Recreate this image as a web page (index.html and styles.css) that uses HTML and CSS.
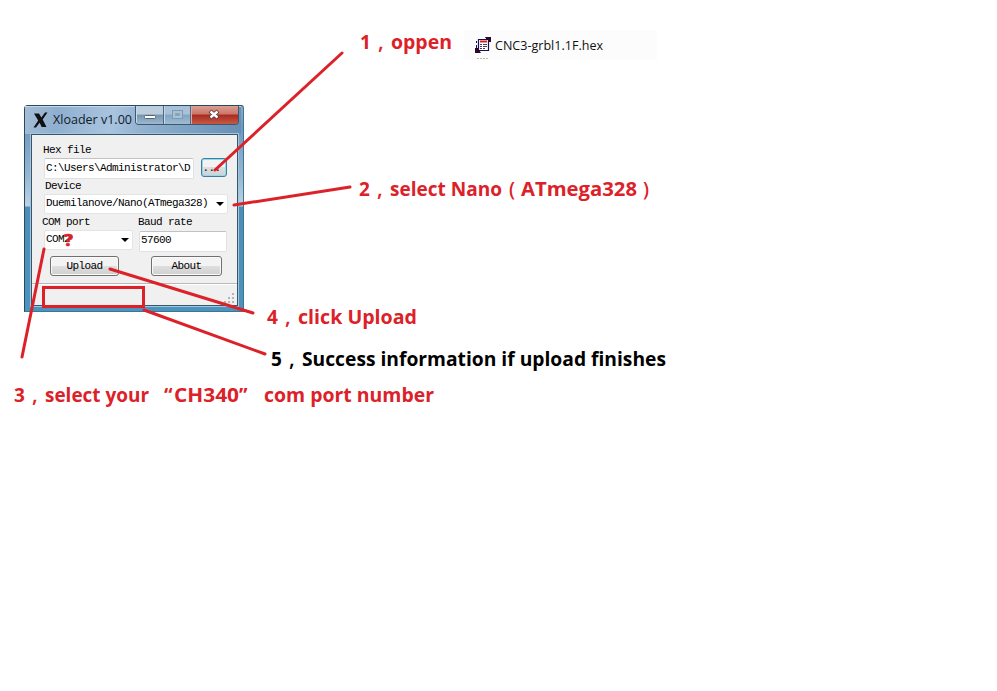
FILE: index.html
```html
<!DOCTYPE html>
<html lang="en">
<head>
<meta charset="utf-8">
<title>Xloader guide</title>
<link rel="stylesheet" href="styles.css">
</head>
<body>
<main class="canvas">
  <section class="window">
    <header class="titlebar">
      <svg class="logo" width="15" height="16" viewBox="0 0 15 16"><path d="M1 1.500h5l2.400 4L12 .5h2.500L9.700 7.600 13.500 15H8.700L6.600 10.800 3 15.500H.5L5.200 8.600Z" fill="#111"/></svg>
      <h1 class="title"><svg width="82" height="22"><text x="0" y="15" textLength="79" lengthAdjust="spacingAndGlyphs">Xloader v1.00</text></svg></h1>
      <div class="controls">
        <span class="control"><svg width="27" height="19"><rect x="8.500" y="9.500" width="11" height="3" rx="1" fill="#fff" stroke="#53657a"/></svg></span>
        <span class="control max"><svg width="26" height="19"><rect x="8.500" y="4.500" width="10" height="8" fill="#a9c1d3" stroke="#7f99b0"/><rect x="11.500" y="7.500" width="4" height="2" fill="#7ba0c0" stroke="#8ba6bc"/></svg></span>
        <span class="control close"><svg width="46" height="19"><path d="M19 5l8 7m0-7l-8 7" stroke="#5e3439" stroke-width="4"/><path d="M19.500 5.500l7 6m0-6l-7 6" stroke="#fff" stroke-width="2.400"/></svg></span>
      </div>
    </header>
    <div class="client">
      <div class="form">
        <label class="caption">Hex file</label>
        <div class="row file-row"><div class="field path">C:\Users\Administrator\D</div><button class="button browse">...</button></div>
        <label class="caption device-label">Device</label>
        <div class="field combo device">Duemilanove/Nano(ATmega328)<i class="arrow"></i></div>
        <div class="row captions"><label class="caption com-label">COM port</label><label class="caption">Baud rate</label></div>
        <div class="row ports"><div class="field combo com">COM2<i class="arrow"></i></div><div class="field baud">57600</div></div>
        <div class="row actions"><button class="button upload">Upload</button><button class="button about">About</button></div>
      </div>
      <footer class="status"><svg width="10" height="12" fill="#b3b3b3"><path d="M8 1h2v2h-2zM4 5h2v2h-2zM8 5h2v2h-2zM0 9h2v2h-2zM4 9h2v2h-2zM8 9h2v2h-2z"/></svg></footer>
    </div>
  </section>

  <div class="file-item">
    <svg class="file-icon" width="18" height="24" viewBox="0 0 18 24">
      <path d="M10 0h6v5h-3zM0 11h3l3 5H0z" fill="#35051a"/>
      <path d="M3.500 2.500h10v11h-10z" fill="#fff" stroke="#15104f" stroke-width="1.200"/>
      <path d="M1.500 4v2m0 2v4" fill="none" stroke="#15104f"/>
      <path d="M5 4.500h7" stroke="#d31e2c" stroke-width="2"/>
      <path d="M5 7.500h2m1 0h4M5 9.500h2m1 0h4M5 11.500h2m1 0h2" stroke="#483a60"/>
      <path d="M2 21.500h11" stroke="#bbb" stroke-dasharray="2 1"/>
    </svg>
    <svg width="120" height="22"><text x="2" y="13" textLength="108" lengthAdjust="spacingAndGlyphs">CNC3-grbl1.1F.hex</text></svg>
  </div>

  <svg class="notes" width="997" height="691" viewBox="0 0 997 691">
    <g class="lines">
      <path d="M342 53L215 170M350 187L234 205M44 249L22 357M110 269L253 313M144 310L265 354"/>
      <rect x="43.500" y="287.500" width="100" height="19"/>
    </g>
    <text class="question" x="64" y="246" textLength="9" lengthAdjust="spacingAndGlyphs">?</text>
    <text y="49"><tspan x="360">1</tspan><tspan class="comma" x="378">,</tspan><tspan x="391" textLength="61" lengthAdjust="spacingAndGlyphs">oppen</tspan></text>
    <text y="196"><tspan x="359">2</tspan><tspan class="comma" x="377">,</tspan><tspan x="390" textLength="112" lengthAdjust="spacingAndGlyphs">select Nano</tspan><tspan class="paren" x="509">(</tspan><tspan x="521" textLength="116" lengthAdjust="spacingAndGlyphs">ATmega328</tspan><tspan class="paren" x="643">)</tspan></text>
    <text y="402"><tspan x="14">3</tspan><tspan class="comma" x="32">,</tspan><tspan x="45" textLength="104" lengthAdjust="spacingAndGlyphs">select your</tspan><tspan x="164">“</tspan><tspan x="174" textLength="65" lengthAdjust="spacingAndGlyphs">CH340</tspan><tspan x="239">”</tspan><tspan x="264" textLength="170" lengthAdjust="spacingAndGlyphs">com port number</tspan></text>
    <text y="324"><tspan x="267">4</tspan><tspan class="comma" x="285">,</tspan><tspan x="298" textLength="119" lengthAdjust="spacingAndGlyphs">click Upload</tspan></text>
    <text class="result" y="366"><tspan x="271">5</tspan><tspan class="comma" x="289">,</tspan><tspan x="302" textLength="364" lengthAdjust="spacingAndGlyphs">Success information if upload finishes</tspan></text>
  </svg>
</main>
</body>
</html>
```
FILE: styles.css
```css
* { box-sizing: border-box; }
body { margin: 0; background: #fff; }
.canvas { position: relative; width: 997px; height: 691px; overflow: hidden; }
.window {
  position: absolute; left: 24px; top: 105px; width: 220px; height: 207px;
  padding: 0 5px 5px 7px; border: 1px solid #274b65; border-right-color: #3c7595; border-bottom-color: #3c7595;
  border-radius: 4px 3px 0 0;
  background: linear-gradient(180deg, #91a9c4 0, #7198bf 22px, #96b7d2 70px, #bdd3e5 100px, #4b8eb7 101px, #4b94bd 100%);
}
.titlebar { display: flex; height: 28px; margin: 0 -3px 0 -7px; padding-left: 8px; background: linear-gradient(100deg, #a6bdd5 0, #8fafd0 15%, #a9c4df 40%, #91b1d0 55%, #668fb5 100%); border-top: 1px solid #c8d8e7; }
.logo { margin-top: 5px; }
.title { margin: 2px 0 0 5px; width: 82px; font: 13px "Open Sans", "Noto Sans", sans-serif; }
.title svg { display: block; }
.title text { fill: #111a28; }
.controls { display: flex; flex: none; width: 104px; height: 19px; margin-top: -1px; border: 1px solid #3f566e; border-top: 0; border-radius: 0 0 4px 4px; overflow: hidden; }
.control { width: 28px; border-right: 1px solid #4f6880; background: linear-gradient(#bccddd 0 45%, #7794af 50%, #9db9d0); box-shadow: inset 1px 0 #c8d8e5; }
.control svg { display: block; }
.max { width: 27px; background: linear-gradient(#a9c1d8 0 45%, #83a5c2 50%, #9ebbd3); }
.close { width: 47px; border-right: 0; background: linear-gradient(#dc9e94 0, #ca7569 45%, #a92a20 50%, #c65a43); box-shadow: inset 1px 0 #e0a79e; }
.client { height: 172px; margin: 0 0 0 -1px; border: 1px solid #37556d; background: #f0f0f0; box-shadow: 0 0 0 1px #a5c5da; color: #000; font: 11px/12px "Liberation Mono", monospace; letter-spacing: -.6px; }
.form { height: 148px; padding: 9px 0 0 10px; }
.row { display: flex; }
.caption { display: block; height: 14px; padding-left: 1px; }
.field { background: #fff; border: 1px solid #dfe1e4; border-top-color: #bfc2c7; border-radius: 2px; padding: 2px 1px; white-space: pre; overflow: hidden; }
.file-row { height: 22px; }
.path { width: 150px; height: 21px; margin-left: 2px; padding-top: 3px; }
.button { height: 20px; padding: 0; border: 1px solid #707070; border-radius: 3px; background: linear-gradient(#f3f3f3 0 48%, #dedede 50%, #d0d0d0); box-shadow: inset 0 0 0 1px #fafafa; color: #000; font: inherit; letter-spacing: -.6px; }
.browse { width: 26px; height: 19px; margin: 0 0 0 7px; padding-right: 5px; border-color: #3f7f9c; box-shadow: inset 0 0 0 1px #8edaf0; }
.device-label { padding-left: 3px; }
.combo { display: flex; justify-content: space-between; border-color: #e4e4e4; }
.arrow { width: 0; height: 0; margin: 5px 2px 0 0; border: 4px solid transparent; border-top-color: #000; border-bottom: 0; }
.device { width: 184px; height: 20px; margin-left: 2px; }
.captions { height: 16px; padding-top: 2px; }
.com-label { width: 95px; padding-left: 0; }
.ports { height: 23px; padding-left: 2px; }
.com { width: 89px; height: 20px; }
.baud { width: 88px; height: 21px; margin: 1px 0 0 6px; }
.actions { margin-top: 3px; padding-left: 8px; }
.upload { width: 69px; }
.about { width: 71px; margin-left: 32px; }
.status { display: flex; justify-content: flex-end; align-items: flex-end; height: 22px; padding: 0 3px 1px; border-top: 1px solid #b9b9b9; box-shadow: inset 0 1px #fff; }
.file-item { position: absolute; left: 464px; top: 30px; width: 193px; height: 30px; padding: 7px 0 0 11px; display: flex; background: #fcfcfc; }
.file-item text { font: 12.500px "Open Sans", "Noto Sans", sans-serif; fill: #111; }
.file-item svg { flex: none; }
.notes { position: absolute; left: 0; top: 0; }
.notes text { font: bold 19px "Open Sans", "Noto Sans", sans-serif; fill: #dc2129; }
.notes .comma { font-weight: 600; font-size: 21px; }
.notes .paren { font-weight: 600; font-size: 19px; }
.notes .result { fill: #000; }
.notes .question { font-size: 16px; stroke: #dc2129; stroke-width: .6px; }
.lines { fill: none; stroke: #dc2129; stroke-width: 3px; stroke-linecap: round; }
```
